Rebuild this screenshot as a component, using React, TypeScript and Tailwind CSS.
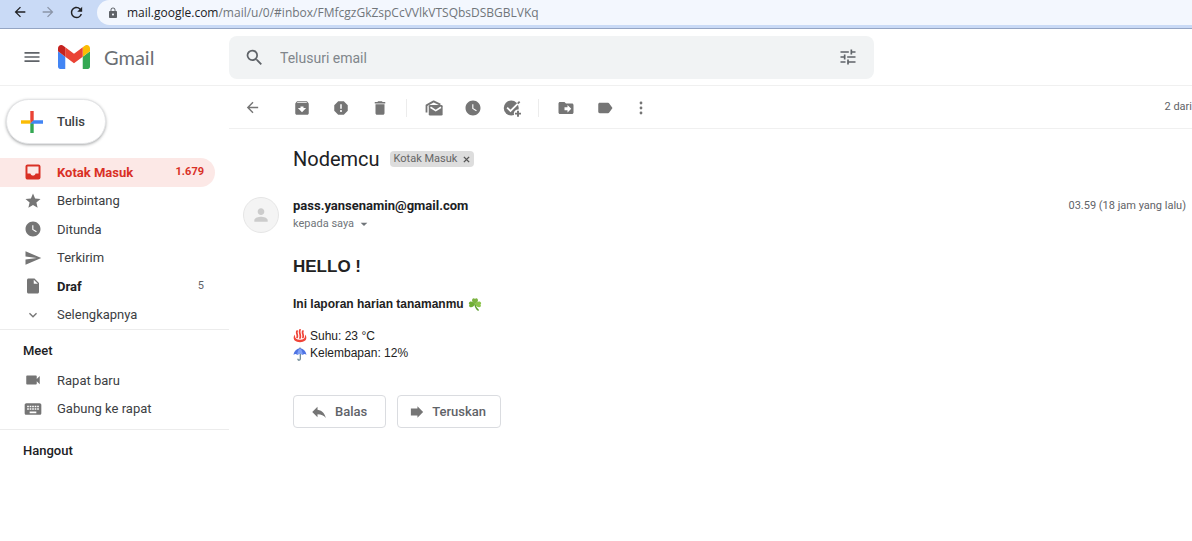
import type { ComponentType, ReactNode } from "react";
import {
  MdArchive,
  MdArrowBack,
  MdArrowDropDown,
  MdArrowForward,
  MdDelete,
  MdDriveFileMove,
  MdExpandMore,
  MdInsertDriveFile,
  MdKeyboard,
  MdLabel,
  MdLock,
  MdMenu,
  MdPerson,
  MdRefresh,
  MdReply,
  MdReport,
  MdSearch,
  MdSend,
  MdStar,
  MdTune,
  MdVideocam,
  MdWatchLater,
} from "react-icons/md";

type IconType = ComponentType<{ className?: string }>;

function GmailLogo() {
  return (
    <svg viewBox="52 42 88 66" className="h-6 w-8" aria-hidden="true">
      <path fill="#4285f4" d="M58 108h14V74L52 59v43c0 3.32 2.69 6 6 6" />
      <path fill="#34a853" d="M120 108h14c3.32 0 6-2.69 6-6V59l-20 15" />
      <path fill="#fbbc04" d="M120 48v26l20-15v-8c0-7.42-8.47-11.65-14.4-7.2" />
      <path fill="#ea4335" d="M72 74V48l24 18 24-18v26L96 92" />
      <path fill="#c5221f" d="M52 51v8l20 15V48l-5.6-4.2c-5.94-4.45-14.4-.22-14.4 7.2" />
    </svg>
  );
}

function ComposePlus() {
  return (
    <svg viewBox="0 0 22 22" className="h-[22px] w-[22px]" aria-hidden="true">
      <path fill="#ea4335" d="M9.3 0h3.4v9.3L9.3 12.7z" />
      <path fill="#fbbc04" d="M0 9.3h9.3v3.4H0z" />
      <path fill="#34a853" d="M9.3 12.7l3.4-3.4V22H9.3z" />
      <path fill="#4285f4" d="M12.7 9.3H22v3.4H9.3z" />
    </svg>
  );
}

function InboxIcon({ className }: { className?: string }) {
  return (
    <svg viewBox="0 0 24 24" fill="none" className={className} aria-hidden="true">
      <rect x="3.300" y="3.300" width="17.400" height="17.400" rx="1.500" stroke="currentColor" strokeWidth="2.600" />
      <path fill="currentColor" d="M3 14h5.500c.4 1.700 1.800 2.800 3.500 2.800s3.100-1.100 3.500-2.800H21v7H3z" />
    </svg>
  );
}

function UnreadIcon({ className }: { className?: string }) {
  return (
    <svg viewBox="0 0 24 24" fill="none" className={className} aria-hidden="true">
      <path d="M2 18V8.500L11.500 3.200 20.500 7.500" stroke="currentColor" strokeWidth="2.400" strokeLinejoin="round" />
      <rect x="5" y="8" width="18.500" height="14" rx="1.800" fill="currentColor" />
      <path d="M7.300 11l7 4.500 7-4.500" stroke="#fff" strokeWidth="2.200" />
    </svg>
  );
}

function MoreIcon({ className }: { className?: string }) {
  return (
    <svg viewBox="0 0 18 18" fill="currentColor" className={className} aria-hidden="true">
      <circle cx="9" cy="4" r="1.400" />
      <circle cx="9" cy="9" r="1.400" />
      <circle cx="9" cy="14" r="1.400" />
    </svg>
  );
}

function AddTaskIcon({ className }: { className?: string }) {
  return (
    <svg viewBox="0 0 24 24" fill="none" className={className} aria-hidden="true">
      <circle cx="11" cy="12" r="10" fill="currentColor" />
      <path d="M5.5 11.5l4.500 4.500L21.500 4.500" stroke="#fff" strokeWidth="2.4" />
      <path d="M19.6 6.2l2.600-2.600" stroke="currentColor" strokeWidth="2.4" />
      <circle cx="20" cy="19.5" r="5.600" fill="#fff" />
      <path d="M20 15.500v8M16 19.500h8" stroke="currentColor" strokeWidth="2.600" />
    </svg>
  );
}

function BlockArrowIcon({ className }: { className?: string }) {
  return (
    <svg viewBox="0 0 16 16" fill="currentColor" className={className} aria-hidden="true">
      <path d="M1 4h7.500V1.500L15 8l-6.500 6.500V12H1z" />
    </svg>
  );
}

function Shamrock() {
  return (
    <svg viewBox="0 0 24 24" className="h-[14px] w-[14px]" aria-hidden="true">
      <path d="M12 12c.3 4 2 8 5.500 10.500" stroke="#5c9e31" strokeWidth="2.4" fill="none" strokeLinecap="round" />
      <path fill="#7cb342" d="M12 12C7 9.500 6 5.500 7.500 3.300 9 1.300 11.300 2 12 3.300c.8-1.300 3.200-1.900 4.500 0C18 5.500 17 9.500 12 12z" />
      <path fill="#6fae35" d="M12 12c-2 5-6 6.500-8.600 5.300-2.200-1.100-1.800-3.500-.4-4.300C1.300 12.300.6 9.700 2.700 8.400 5.500 7 9.500 8.500 12 12z" />
      <path fill="#8bc34a" d="M12 12c2 5 6 6.500 8.600 5.300 2.200-1.100 1.800-3.500.4-4.300 1.700-.7 2.400-3.300.3-4.600C18.500 7 14.500 8.500 12 12z" />
    </svg>
  );
}

function HotSprings() {
  return (
    <svg viewBox="0 0 24 24" className="h-[14px] w-[14px]" fill="none" aria-hidden="true">
      <path fill="#f04438" d="M3.500 9.500C-1 14 .5 22.500 12 22.500S25 14 20.500 9.500c.8 5.500-1.500 9-8.500 9s-9.300-3.500-8.500-9z" />
      <path
        d="M7 3.500c-2.200 4 2 6 0 11M12 1.500c-2.600 5 2.400 8 0 14M17 3.500c-2.200 4 2 6 0 11"
        stroke="#f04438"
        strokeWidth="3"
        strokeLinecap="round"
      />
    </svg>
  );
}

function Umbrella() {
  return (
    <svg viewBox="0 0 24 24" className="h-[14px] w-[14px]" fill="none" aria-hidden="true">
      <path d="M12.500 11v9.500c0 2.800-4 2.800-4 .3" stroke="#607d8b" strokeWidth="2" strokeLinecap="round" />
      <path fill="#4f74e3" d="M12 2C5.500 3 1.500 7.500 1 13.500c2-2 4.500-2 6.200 0 1.800-2 7.800-2 9.600 0 1.700-2 4.200-2 6.200 0C22.500 7.500 18.500 3 12 2z" />
      <path fill="#7fa0f5" d="M12 2C9 4.500 7.400 8.500 7.200 13.500c1.800-2 7.800-2 9.600 0C16.600 8.500 15 4.500 12 2z" />
      <path d="M12 .8V3" stroke="#455a8f" strokeWidth="1.600" />
    </svg>
  );
}

function BrowserBar() {
  return (
    <div className="flex h-[29px] items-start border-b border-[#94a5c4] bg-[#c9daf6] pl-3">
      <div className="flex h-6 items-center gap-3 pr-3">
        <button aria-label="Kembali"><MdArrowBack className="size-4 text-[#202124]" /></button>
        <button aria-label="Maju"><MdArrowForward className="size-4 text-[#8b95a8]" /></button>
        <button aria-label="Muat ulang"><MdRefresh className="size-[17px] text-[#202124]" /></button>
      </div>
      <div className="flex h-[25px] min-w-0 flex-1 items-center gap-2 rounded-l-full bg-[#f3f7fe] pl-[10px]">
        <MdLock className="size-3 shrink-0 text-[#5f6368]" />
        <span className="truncate font-['Open_Sans',sans-serif] text-[12px] text-[#70757a]">
          <span className="text-[#202124]">mail.google.com</span>/mail/u/0/#inbox/FMfcgzGkZspCcVVlkVTSQbsDSBGBLVKq
        </span>
      </div>
    </div>
  );
}

function Header() {
  return (
    <header className="flex h-[57px] items-center border-b border-[#f0f0f0]">
      <div className="flex w-[229px] shrink-0 items-center pl-[22px]">
        <button aria-label="Menu utama"><MdMenu className="size-5 text-[#5f6368]" /></button>
        <a href="#inbox" className="ml-4 flex items-center gap-[14px]">
          <GmailLogo />
          <span className="font-['Lato',sans-serif] text-[20px] text-[#6b6f74]">Gmail</span>
        </a>
      </div>
      <form className="flex h-[43px] max-w-[645px] flex-1 items-center rounded-lg bg-[#f1f3f4] pr-4 pl-[15px]">
        <button type="button" aria-label="Telusuri"><MdSearch className="size-[21px] text-[#5f6368]" /></button>
        <input
          type="search"
          aria-label="Telusuri email"
          placeholder="Telusuri email"
          className="ml-[15px] min-w-0 flex-1 bg-transparent pt-[2px] text-[14px] outline-none placeholder:text-[#80868b]"
        />
        <button type="button" aria-label="Opsi penelusuran"><MdTune className="size-5 text-[#5f6368]" /></button>
      </form>
    </header>
  );
}

interface NavItemProps {
  icon: IconType;
  label: string;
  count?: string;
  active?: boolean;
  bold?: boolean;
  iconSize?: string;
}

function NavItem({ icon: Icon, label, count, active, bold, iconSize = "size-[18px]" }: NavItemProps) {
  const tone = active
    ? "bg-[#fce8e6] font-bold text-[#d93025]"
    : bold
      ? "font-bold text-[#202124]"
      : "text-[#3c4043]";
  return (
    <li className="mr-[14px] flex">
      <a href="#folder" className={`flex flex-1 items-center rounded-r-full pr-[11px] pl-[22px] text-[13px] ${tone}`}>
        <span className={`mr-[14px] flex w-[21px] justify-center ${active ? "" : "text-[#757575]"}`}>
          <Icon className={iconSize} />
        </span>
        <span className="flex-1">{label}</span>
        {count && <span className={active ? "text-[11px]" : "text-[11px] font-normal text-[#5f6368]"}>{count}</span>}
      </a>
    </li>
  );
}

function Sidebar() {
  return (
    <aside className="w-[229px] shrink-0">
      <div className="px-[6px] pt-[13px] pb-3">
        <button className="flex h-[45px] w-[100px] items-center gap-[14px] rounded-full border border-[#e4e5e7] bg-white pl-[14px] text-[13px] font-medium text-[#3c4043] shadow-[0_1px_3px_rgba(60,64,67,0.45)]">
          <ComposePlus />
          Tulis
        </button>
      </div>
      <nav aria-label="Folder">
        <ul className="grid h-[174px] auto-rows-fr border-b border-[#ececec] pt-[2px]">
          <NavItem icon={InboxIcon} label="Kotak Masuk" count="1.679" active />
          <NavItem icon={MdStar} label="Berbintang" />
          <NavItem icon={MdWatchLater} label="Ditunda" />
          <NavItem icon={MdSend} label="Terkirim" />
          <NavItem icon={MdInsertDriveFile} label="Draf" count="5" bold />
          <NavItem icon={MdExpandMore} label="Selengkapnya" iconSize="size-4" />
        </ul>
      </nav>
      <section className="border-b border-[#ececec] pt-3 pb-[6px]">
        <h2 className="mb-[6px] pl-[23px] text-[13px] leading-[18px] font-medium text-[#202124]">Meet</h2>
        <ul className="grid h-[57px] auto-rows-fr">
          <NavItem icon={MdVideocam} label="Rapat baru" />
          <NavItem icon={MdKeyboard} label="Gabung ke rapat" iconSize="size-5" />
        </ul>
      </section>
      <h2 className="pt-3 pl-[23px] text-[13px] leading-[18px] font-medium text-[#202124]">Hangout</h2>
    </aside>
  );
}

function ToolButton({ label, icon: Icon }: { label: string; icon: IconType }) {
  return (
    <button aria-label={label} className="flex w-[39px] justify-center">
      <Icon className="size-[18px]" />
    </button>
  );
}

function ToolGroup({ children, last }: { children: ReactNode; last?: boolean }) {
  return (
    <div className={`flex items-center ${last ? "" : "mr-[7px] border-r border-[#ececec] pr-[7px]"}`}>{children}</div>
  );
}

function Toolbar() {
  return (
    <div className="flex h-[43px] items-center border-b border-[#f0f0f0] pt-px pl-1 text-[#757575]">
      <button aria-label="Kembali ke Kotak Masuk" className="mr-[10px] flex w-[39px] justify-center">
        <MdArrowBack className="size-[17px]" />
      </button>
      <ToolGroup>
        <ToolButton label="Arsipkan" icon={MdArchive} />
        <ToolButton label="Laporkan spam" icon={MdReport} />
        <ToolButton label="Hapus" icon={MdDelete} />
      </ToolGroup>
      <ToolGroup>
        <ToolButton label="Tandai belum dibaca" icon={UnreadIcon} />
        <ToolButton label="Tunda" icon={MdWatchLater} />
        <ToolButton label="Tambahkan ke Tasks" icon={AddTaskIcon} />
      </ToolGroup>
      <ToolGroup last>
        <ToolButton label="Pindahkan ke" icon={MdDriveFileMove} />
        <ToolButton label="Label" icon={MdLabel} />
        <button aria-label="Lainnya" className="flex w-[34px] justify-center">
          <MoreIcon className="size-[18px]" />
        </button>
      </ToolGroup>
      <span className="ml-auto text-[11px] text-[#5f6368]">2 dari</span>
    </div>
  );
}

function Message() {
  return (
    <article className="pt-[18px] pr-[6px] pl-16">
      <div className="flex h-6 items-center gap-[10px]">
        <h1 className="text-[20px] text-[#202124]">Nodemcu</h1>
        <span className="flex h-4 items-center gap-[6px] rounded bg-[#dddddd] px-1 text-[11px] text-[#666666]">
          Kotak Masuk
          <button aria-label="Hapus label">
            <svg viewBox="0 0 8 8" className="size-[7px]" aria-hidden="true">
              <path d="M1 1l6 6M7 1L1 7" stroke="#555" strokeWidth="1.600" />
            </svg>
          </button>
        </span>
      </div>

      <header className="mt-[26px] -ml-[50px] flex">
        <span className="flex size-9 items-center justify-center rounded-full border border-[#e6e6e6] bg-[#f4f4f4]">
          <MdPerson className="size-5 text-[#cccccc]" />
        </span>
        <div className="ml-[14px] flex-1">
          <div className="flex items-center justify-between leading-[18px]">
            <span className="text-[13px] font-bold text-[#202124]">pass.yansenamin@gmail.com</span>
            <time className="text-[11px] text-[#5f6368]">03.59 (18 jam yang lalu)</time>
          </div>
          <button className="flex items-center text-[11px] leading-[17px] text-[#70757a]">
            kepada saya
            <MdArrowDropDown className="ml-[2px] size-4" />
          </button>
        </div>
      </header>

      <div className="font-['Liberation_Sans',Arial,sans-serif] text-[#222222]">
        <h2 className="mt-6 text-[17px] leading-5 font-bold">HELLO !</h2>
        <p className="mt-[18px] flex items-center gap-1 text-[12px] leading-[18px] font-bold">
          Ini laporan harian tanamanmu <Shamrock />
        </p>
        <p className="mt-[14px] flex items-center gap-[3px] text-[12px] leading-[18px]">
          <HotSprings /> Suhu: 23 °C
        </p>
        <p className="flex items-center gap-[3px] text-[12px] leading-[17px]">
          <Umbrella /> Kelembapan: 12%
        </p>
      </div>

      <div className="mt-[33px] flex gap-[11px] text-[13px] font-medium text-[#5f6368]">
        <button className="flex h-[33px] items-center gap-[7px] rounded border border-[#dadce0] pr-[18px] pl-4">
          <MdReply className="size-[18px] text-[#757575]" />
          Balas
        </button>
        <button className="flex h-[33px] items-center gap-2 rounded border border-[#dadce0] pr-[14px] pl-3">
          <BlockArrowIcon className="size-[14px] text-[#757575]" />
          Teruskan
        </button>
      </div>
    </article>
  );
}

export default function App() {
  return (
    <div className="min-h-screen bg-white font-['Roboto',sans-serif]">
      <BrowserBar />
      <Header />
      <div className="flex">
        <Sidebar />
        <main className="min-w-0 flex-1">
          <Toolbar />
          <Message />
        </main>
      </div>
    </div>
  );
}
